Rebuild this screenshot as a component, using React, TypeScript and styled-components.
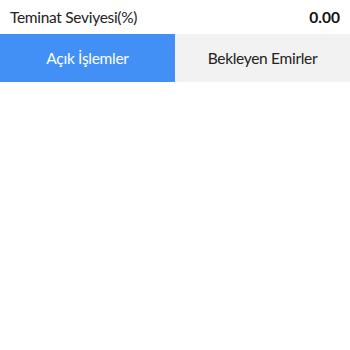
import styled, { createGlobalStyle } from 'styled-components'

const Global = createGlobalStyle`
  body {
    margin: 0;
    background: #ffffff;
    font-family: Lato, 'Noto Sans', sans-serif;
  }
`

const Page = styled.div`
  width: 350px;
  height: 350px;
  display: flex;
  flex-direction: column;
`

const Header = styled.div`
  height: 34px;
  display: flex;
  align-items: center;
  justify-content: space-between;
  padding: 0 10px;
`

const Label = styled.span`
  font-size: 15.5px;
  letter-spacing: -0.3px;
  color: #222;
`

const Value = styled.span`
  font-size: 15.5px;
  font-weight: 700;
  color: #111;
`

const Tabs = styled.div`
  display: flex;
  height: 48px;
`

const Tab = styled.button<{ $active?: boolean }>`
  all: unset;
  flex: 1;
  display: flex;
  align-items: center;
  justify-content: center;
  font-family: Lato, 'Noto Sans', sans-serif;
  font-size: 15.5px;
  letter-spacing: -0.3px;
  background: ${(p) => (p.$active ? '#4290f5' : '#f2f2f2')};
  color: ${(p) => (p.$active ? '#ffffff' : '#222')};
  cursor: pointer;
`

export default function App() {
  return (
    <>
      <Global />
      <Page>
        <Header>
          <Label>Teminat Seviyesi(%)</Label>
          <Value>0.00</Value>
        </Header>
        <Tabs>
          <Tab $active>Açık İşlemler</Tab>
          <Tab>Bekleyen Emirler</Tab>
        </Tabs>
      </Page>
    </>
  )
}
